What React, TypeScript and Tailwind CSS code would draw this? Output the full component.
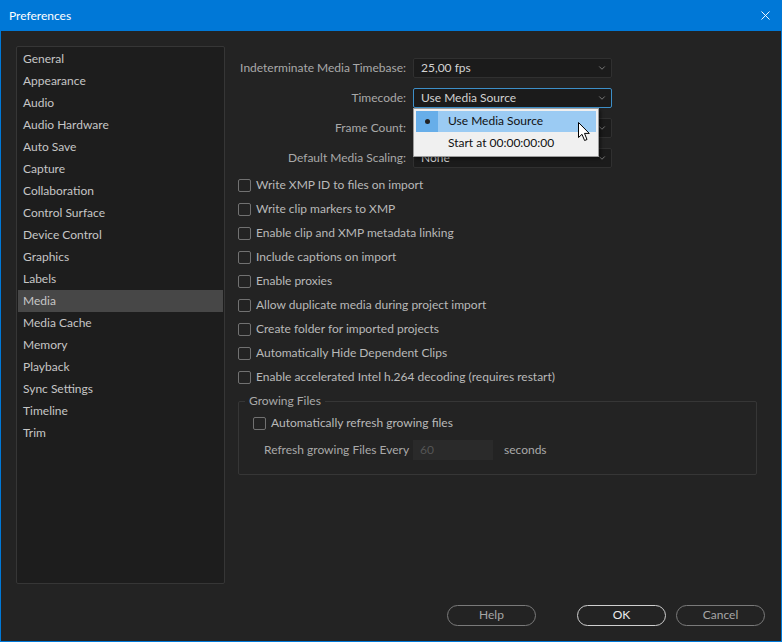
import { X, ChevronDown } from "lucide-react";

const categories = [
  "General",
  "Appearance",
  "Audio",
  "Audio Hardware",
  "Auto Save",
  "Capture",
  "Collaboration",
  "Control Surface",
  "Device Control",
  "Graphics",
  "Labels",
  "Media",
  "Media Cache",
  "Memory",
  "Playback",
  "Sync Settings",
  "Timeline",
  "Trim",
];

const options = [
  "Write XMP ID to files on import",
  "Write clip markers to XMP",
  "Enable clip and XMP metadata linking",
  "Include captions on import",
  "Enable proxies",
  "Allow duplicate media during project import",
  "Create folder for imported projects",
  "Automatically Hide Dependent Clips",
  "Enable accelerated Intel h.264 decoding (requires restart)",
];

function Box() {
  return <span className="w-[13px] h-[13px] shrink-0 rounded-[2px] border-[1.5px] border-[#717171]" />;
}

function Select({ value, focused }: { value: string; focused?: boolean }) {
  return (
    <div
      className={`w-[199px] h-[20px] flex items-center justify-between pl-[7px] pr-[4px] rounded-[2px] bg-[#1b1b1b] border ${
        focused ? "border-[#3d8fc8]" : "border-[#303030]"
      }`}
    >
      <span className="text-[#d2d2d2] pb-[1px]">{value}</span>
      <ChevronDown className="w-[10px] h-[10px] text-[#9a9a9a]" strokeWidth={1.75} />
    </div>
  );
}

function Row({ label, value, focused }: { label: string; value: string; focused?: boolean }) {
  return (
    <div className="flex items-center h-[20px]">
      <span className="w-[169px] text-right pr-[1px] pb-[1px] text-[#a9a9a9] whitespace-nowrap">{label}</span>
      <span className="w-[6px]" />
      <Select value={value} focused={focused} />
    </div>
  );
}

function Cursor() {
  return (
    <svg width="13" height="20" viewBox="0 0 13 20" className="absolute left-[164px] top-[13px]">
      <path
        d="M0.5 0.5 L0.5 15.5 L4 12.3 L6.6 18.5 L9 17.5 L6.5 11.4 L11.3 11.4 Z"
        fill="#ffffff"
        stroke="#000000"
        strokeWidth="1"
        strokeLinejoin="round"
      />
    </svg>
  );
}

function Button({ label, primary }: { label: string; primary?: boolean }) {
  return (
    <button
      className={`w-[89px] h-[21px] rounded-full border flex items-center justify-center pb-[1px] ${
        primary ? "border-[#cfcfcf] text-[#ececec]" : "border-[#7a7a7a] text-[#a6a6a6]"
      }`}
    >
      {label}
    </button>
  );
}

export default function App() {
  return (
    <div
      className="w-[782px] h-[642px] flex flex-col bg-[#0078d7] text-[12px] leading-none"
      style={{ fontFamily: 'Lato, "Noto Sans", sans-serif' }}
    >
      <div className="h-[31px] shrink-0 flex items-center justify-between pl-[9px] pr-[9px] text-white text-[12px]">
        <span>Preferences</span>
        <X className="w-[15px] h-[15px]" strokeWidth={1.5} />
      </div>
      <div className="flex-1 flex flex-col mx-[1px] mb-[1px] bg-[#232323]">
        <div className="flex pt-[15px] pl-[15px]">
          <div className="w-[209px] h-[538px] bg-[#1d1d1d] border border-[#363636] rounded-[2px] pt-[1px] px-[1px]">
            {categories.map((c) => (
              <div
                key={c}
                className={`h-[22px] flex items-center pl-[5px] pb-[1px] text-[#c6c6c6] ${
                  c === "Media" ? "bg-[#474747]" : ""
                }`}
              >
                {c}
              </div>
            ))}
          </div>

          <div className="ml-[13px] pt-[12px] flex flex-col">
            <div className="flex flex-col gap-[10px]">
              <Row label="Indeterminate Media Timebase:" value="25,00 fps" />
              <div className="relative">
                <Row label="Timecode:" value="Use Media Source" focused />
                <div className="absolute left-[175px] top-[20px] w-[186px] h-[49px] bg-[#f0f0f0] border border-[#9c9c9c] shadow-[2px_2px_3px_rgba(0,0,0,0.45)] z-10 p-[2px] flex flex-col text-[#111]">
                  <div className="h-[22px] flex items-center bg-[#9bcbf3]">
                    <span className="w-[22px] h-full flex items-center justify-center bg-[#67aee9]">
                      <span className="w-[5px] h-[5px] rounded-full bg-[#222]" />
                    </span>
                    <span className="pl-[10px] pb-[1px]">Use Media Source</span>
                  </div>
                  <div className="h-[22px] flex items-center pl-[32px] pb-[1px]">Start at 00:00:00:00</div>
                  <Cursor />
                </div>
              </div>
              <Row label="Frame Count:" value="" />
              <Row label="Default Media Scaling:" value="None" />
            </div>

            <div className="mt-[5px] flex flex-col">
              {options.map((o) => (
                <div key={o} className="h-[24px] flex items-center gap-[5px] text-[#b9b9b9] whitespace-nowrap">
                  <Box />
                  <span className="pb-[1px]">{o}</span>
                </div>
              ))}
            </div>

            <div className="relative mt-[12px] w-[519px] h-[74px] border border-[#363636] rounded-[2px] pt-[13px] pl-[14px]">
              <span className="absolute left-[6px] -top-[7px] px-[4px] bg-[#232323] text-[#a9a9a9]">Growing Files</span>
              <div className="h-[16px] flex items-center gap-[5px] text-[#b9b9b9]">
                <Box />
                <span className="pb-[1px]">Automatically refresh growing files</span>
              </div>
              <div className="mt-[9px] flex items-center text-[#a9a9a9] whitespace-nowrap">
                <span className="w-[160px] pl-[11px] pb-[1px]">Refresh growing Files Every</span>
                <span className="w-[80px] h-[20px] bg-[#2a2a2a] flex items-center pl-[7px] pb-[1px] text-[#555555]">60</span>
                <span className="ml-[11px] pb-[1px]">seconds</span>
              </div>
            </div>
          </div>
        </div>

        <div className="mt-auto mb-[15px] flex justify-end pr-[16px]">
          <Button label="Help" />
          <span className="w-[41px]" />
          <Button label="OK" primary />
          <span className="w-[10px]" />
          <Button label="Cancel" />
        </div>
      </div>
    </div>
  );
}
